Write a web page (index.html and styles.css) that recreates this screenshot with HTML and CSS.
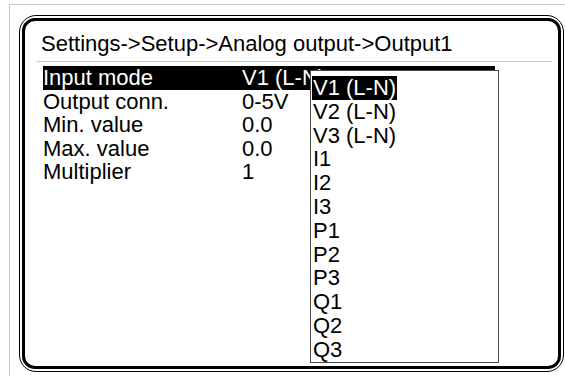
FILE: index.html
```html
<!DOCTYPE html>
<html lang="en">
<head>
  <meta charset="UTF-8" />
  <meta name="viewport" content="width=device-width, initial-scale=1.0" />
  <title>Analog output - Output1</title>
  <link rel="stylesheet" href="styles.css">
</head>
<body>
  <div class="shot">
    <div class="frame">
      <div class="screen">
        <div class="title">Settings-&gt;Setup-&gt;Analog output-&gt;Output1</div>
        <div class="rows">
          <div class="row selected"><span class="label">Input mode</span><span class="value">V1 (L-N)</span></div>
          <div class="row"><span class="label">Output conn.</span><span class="value">0-5V</span></div>
          <div class="row"><span class="label">Min. value</span><span class="value">0.0</span></div>
          <div class="row"><span class="label">Max. value</span><span class="value">0.0</span></div>
          <div class="row"><span class="label">Multiplier</span><span class="value">1</span></div>
        </div>

        <!-- otevřený výběr pro Input mode -->
        <ul class="dropdown">
          <li><span class="active">V1 (L-N)</span></li>
          <li><span>V2 (L-N)</span></li>
          <li><span>V3 (L-N)</span></li>
          <li><span>I1</span></li>
          <li><span>I2</span></li>
          <li><span>I3</span></li>
          <li><span>P1</span></li>
          <li><span>P2</span></li>
          <li><span>P3</span></li>
          <li><span>Q1</span></li>
          <li><span>Q2</span></li>
          <li><span>Q3</span></li>
        </ul>
      </div>
    </div>
  </div>
</body>
</html>
```

FILE: styles.css
```css
body {
  margin: 0;
  background: #fff;
  font-family: "Liberation Sans", Arial, sans-serif;
  color: #000;
}
.shot {
  margin: 4px 0 0 9px;
  border-top: 1px solid #c8c8c8;
  border-left: 1px solid #c8c8c8;
  padding: 10px 0 0 9px;
  height: 372px;
  box-sizing: border-box;
}
.frame {
  width: 539px;
  height: 351px;
  border: 1px solid #000;
  border-radius: 17px;
  padding: 2px;
}
.screen {
  position: relative;
  height: 345px;
  border: 3px solid #000;
  border-radius: 13px;
  font-size: 22px;
}
.title {
  margin: 0 6px 0 12px;
  padding: 10px 0 4px 4px;
  line-height: 26px;
  border-bottom: 1px solid #c8c8c8;
}
.rows {
  margin: 4px 0 0 18px;
  width: 452px;
}
.row {
  display: flex;
  line-height: 23.5px;
  white-space: nowrap;
}
.row.selected {
  background-color: #000;
  color: #fff;
}
.label {
  width: 199px;
  flex: none;
}
.dropdown {
  position: absolute;
  left: 285px;
  top: 49px;
  width: 186px;
  margin: 0;
  padding: 5px 0 0 1px;
  list-style: none;
  background: #fff;
  border: 1px solid #4a4a4a;
}
.dropdown li {
  line-height: 23.8px;
  height: 23.8px;
}
.dropdown span {
  display: inline-block;
  padding: 0 1px;
}
.dropdown .active {
  background-color: #000;
  color: #fff;
}
```
